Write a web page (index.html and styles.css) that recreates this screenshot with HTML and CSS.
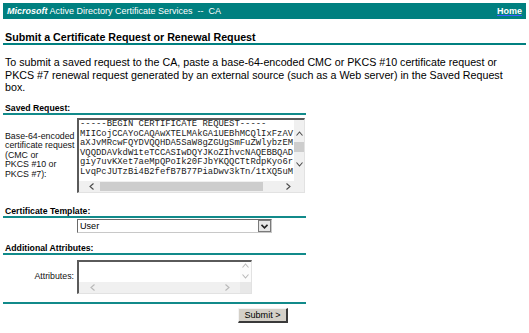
FILE: index.html
```html
<!DOCTYPE html>
<html lang="en">
<head>
<meta charset="utf-8">
<title>Microsoft Active Directory Certificate Services</title>
<link rel="stylesheet" href="styles.css">
</head>
<body>
<div class="page">
  <div class="topbar">
    <span class="brand"><i>Microsoft</i> Active Directory Certificate Services &nbsp;--&nbsp; CA</span>
    <a class="home" href="#">Home</a>
  </div>

  <h1 class="title">Submit a Certificate Request or Renewal Request</h1>

  <p class="intro">To submit a saved request to the CA, paste a base-64-encoded CMC or PKCS #10 certificate request or PKCS #7 renewal request generated by an external source (such as a Web server) in the Saved Request box.</p>

  <form class="form">
    <div class="sect sect-first">Saved Request:</div>
    <div class="row row-req">
      <div class="lbl lbl-left">Base-64-encoded<br>certificate request<br>(CMC or<br>PKCS #10 or<br>PKCS #7):</div>
      <div class="ta ta-req">
        <div class="ta-main">
          <div class="ta-text">-----BEGIN CERTIFICATE REQUEST-----
MIICojCCAYoCAQAwXTELMAkGA1UEBhMCQlIxFzAV
aXJvMRcwFQYDVQQHDA5SaW8gZGUgSmFuZWlybzEM
VQQDDAVkdW1teTCCASIwDQYJKoZIhvcNAQEBBQAD
giy7uvKXet7aeMpQPoIk20FJbYKQQCTtRdpKyo6r
LvqPcJUTzBi4B2fefB7B77PiaDwv3kTn/1tXQ5uM</div>
          <div class="vbar vbar-req">
            <svg class="arr arr-up" width="7" height="5" viewBox="0 0 7 5"><polyline points="0.5,4.5 3.5,1 6.5,4.5" /></svg>
            <div class="vthumb"></div>
            <svg class="arr arr-down" width="7" height="5" viewBox="0 0 7 5"><polyline points="0.5,0.5 3.5,4 6.5,0.5" /></svg>
          </div>
        </div>
        <div class="hbar hbar-req">
          <svg class="arr arr-left" width="5" height="7" viewBox="0 0 5 7"><polyline points="4.5,0.5 1,3.5 4.5,6.5" /></svg>
          <div class="hthumb"></div>
          <svg class="arr arr-right" width="5" height="7" viewBox="0 0 5 7"><polyline points="0.5,0.5 4,3.5 0.5,6.5" /></svg>
        </div>
      </div>
    </div>

    <div class="sect sect-tpl">Certificate Template:</div>
    <div class="row row-select">
      <div class="select">
        <span class="select-value">User</span>
        <span class="select-btn"><svg width="7" height="5" viewBox="0 0 7 5"><polyline points="0.5,0.8 3.5,3.8 6.5,0.8" /></svg></span>
      </div>
    </div>

    <div class="sect sect-attr">Additional Attributes:</div>
    <div class="row row-attr">
      <div class="lbl lbl-right">Attributes:</div>
      <div class="ta ta-attr">
        <div class="ta-main">
          <div class="ta-text"></div>
          <div class="vbar vbar-attr">
            <svg class="arr arr-up dis" width="7" height="5" viewBox="0 0 7 5"><polyline points="0.5,4.5 3.5,1 6.5,4.5" /></svg>
            <svg class="arr arr-down dis" width="7" height="5" viewBox="0 0 7 5"><polyline points="0.5,0.5 3.5,4 6.5,0.5" /></svg>
          </div>
        </div>
        <div class="hbar hbar-attr">
          <div class="htrack">
            <svg class="arr dis" width="5" height="7" viewBox="0 0 5 7"><polyline points="4.5,0.5 1,3.5 4.5,6.5" /></svg>
            <svg class="arr dis" width="5" height="7" viewBox="0 0 5 7"><polyline points="0.5,0.5 4,3.5 0.5,6.5" /></svg>
          </div>
          <div class="corner"></div>
        </div>
      </div>
    </div>

    <div class="rule"></div>
    <div class="row row-submit">
      <button type="button" class="btn">Submit &gt;</button>
    </div>
  </form>
</div>
</body>
</html>
```

FILE: styles.css
```css
* { box-sizing: border-box; }
html, body { margin: 0; background: #fff; }
body { font-family: "Liberation Sans", Arial, sans-serif; color: #000; }

.page { padding: 3px; }

.topbar {
  display: flex;
  justify-content: space-between;
  align-items: center;
  height: 16px;
  background: #008080;
  color: #fff;
  padding: 0 4px;
  font-size: 9px;
}
.brand i { font-weight: bold; }
.home {
  color: #fff;
  font-weight: bold;
  text-decoration: underline;
  text-decoration-color: #3d5cff;
}

.title {
  margin: 12px 0 0;
  padding-left: 2px;
  font-size: 10.7px;
  line-height: 12px;
  font-weight: bold;
  border-bottom: 2px solid #008080;
}

.intro {
  margin: 11px 0 0;
  padding-left: 2px;
  width: 514px;
  font-size: 10.7px;
  line-height: 12.5px;
}

.form { width: 303px; }

.sect {
  padding-left: 2px;
  font-size: 8.7px;
  font-weight: bold;
  line-height: 10px;
  border-bottom: 2px solid #118a8a;
}
.sect-first { margin-top: 9.5px; }
.sect-tpl { margin-top: 13px; }
.sect-attr { margin-top: 10px; }

.row { display: flex; align-items: center; }
.row-req { margin-top: 3px; }
.row-select { margin-top: 1px; padding-left: 74px; }
.row-attr { margin-top: 5px; }
.row-submit { margin-top: 4px; justify-content: flex-end; padding-right: 18px; }

.lbl {
  width: 74px;
  flex: none;
  font-size: 8.8px;
  line-height: 9.6px;
  color: #111;
}
.lbl-left { padding-left: 2px; }
.lbl-right { text-align: right; padding-right: 3px; }

.ta {
  display: flex;
  flex-direction: column;
  background: #fff;
  border-style: solid;
  border-width: 2px 1px 1px 2px;
  border-color: #5a5a5a #e2e2e2 #e2e2e2 #5a5a5a;
}
.ta-req { width: 228px; height: 75px; }
.ta-attr { width: 175px; height: 34px; }

.ta-main { display: flex; flex: 1; min-height: 0; }
.ta-text {
  flex: 1;
  min-width: 0;
  overflow: hidden;
  white-space: pre;
  padding-left: 1px;
  font-family: "Liberation Mono", "Courier New", monospace;
  font-size: 8.9px;
  line-height: 9.6px;
  color: #222;
}

.arr { display: block; flex: none; }
.arr polyline { fill: none; stroke: #4a4a4a; stroke-width: 1.1; }
.arr.dis polyline { stroke: #b8b8b8; }

.vbar {
  flex: none;
  display: flex;
  flex-direction: column;
  align-items: center;
}
.vbar-req { width: 10px; background: #f0f0f0; }
.vbar-req .arr-up { margin-top: 11px; }
.vthumb { width: 10px; height: 10px; margin-top: 6px; background: #cdcdcd; }
.vbar-req .arr-down { margin-top: 10px; }

.vbar-attr { width: 11px; background: #fbfbfb; }
.vbar-attr .arr-up { margin-top: 1px; }
.vbar-attr .arr-down { margin-top: 6px; }

.hbar {
  flex: none;
  height: 11px;
  display: flex;
  align-items: center;
  background: #f0f0f0;
}
.hbar-req .arr-left { margin-left: 10px; }
.hthumb { width: 163px; height: 9px; margin-left: 6px; background: #cdcdcd; }
.hbar-req .arr-right { margin-left: 23px; }

.htrack {
  flex: 1;
  height: 100%;
  display: flex;
  align-items: center;
  justify-content: space-between;
  padding: 0 10px 0 11px;
}
.corner { width: 11px; height: 100%; background: #e8e8e8; }

.select {
  display: flex;
  align-items: center;
  width: 195px;
  height: 14px;
  background: #fff;
  border-style: solid;
  border-width: 1px;
  border-color: #6a6a6a #c8c8c8 #c8c8c8 #6a6a6a;
}
.select-value {
  flex: 1;
  padding-left: 2px;
  font-size: 9.1px;
}
.select-btn {
  display: flex;
  align-items: center;
  justify-content: center;
  width: 13px;
  height: 12px;
  background: #e6e6e6;
  border: 1px solid #7a7a7a;
}
.select-btn polyline { fill: none; stroke: #202020; stroke-width: 1.6; }

.rule {
  margin-top: 8px;
  height: 2px;
  background: #118a8a;
}

.btn {
  width: 50px;
  height: 15px;
  padding: 0;
  font-family: "Liberation Sans", Arial, sans-serif;
  font-size: 9.1px;
  color: #000;
  background: #d4d0c8;
  border-style: solid;
  border-width: 1px 2px 2px 1px;
  border-color: #f4f4f4 #3a3a3a #3a3a3a #f4f4f4;
}
```
